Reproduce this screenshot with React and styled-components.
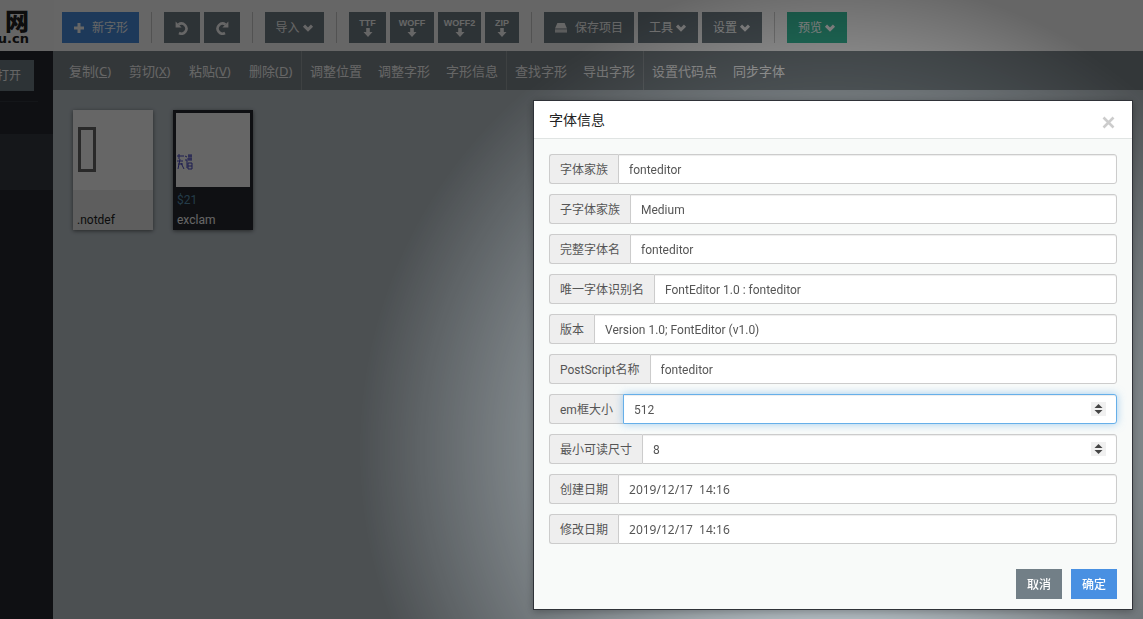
import React from "react";
import styled, { createGlobalStyle, css } from "styled-components";

const Global = createGlobalStyle`
  * { box-sizing: border-box; }
  html, body, #root { height: 100%; }
  body { margin: 0; overflow: hidden; background: #bec8ce; color: #555;
    font: 12px/18px "Noto Sans", "Noto Sans CJK SC", sans-serif; }
  button, input { font: inherit; }
`;

const Page = styled.div`display: flex; flex-direction: column; min-height: 100%;`;
const Header = styled.header`display: flex; align-items: center; height: 51px; background: #fff;`;
const Logo = styled.div`
  display: flex; flex-direction: column; align-items: flex-end; flex: none;
  width: 54px; height: 51px; padding: 8px 25px 0 0; overflow: hidden; color: #222; font-weight: 700;
  background: #fcfcfc;
`;
const LogoMark = styled.span`font: 900 24px/24px "Noto Sans CJK SC", sans-serif;`;
const LogoUrl = styled.span`font: 700 13px/14px "DejaVu Sans", sans-serif;`;
const Tools = styled.div`display: flex; align-items: center; padding: 4px 0 0 8px;`;
const Group = styled.div`
  display: flex; gap: 4px;
  & + & { margin-left: 12px; padding-left: 12px; border-left: 1px solid #ccc; }
`;
const ToolButton = styled.button`
  display: flex; align-items: center; justify-content: center; gap: ${(p) => p.$gap || 2}px;
  width: ${(p) => p.$w}px; height: 31px; padding: 0; border: 0; color: #fff; white-space: nowrap;
  background: ${(p) => p.$bg || "#727f87"};
`;
const Format = styled.span`
  display: flex; flex-direction: column; align-items: center; gap: 1px;
  font: 700 9px/8px "Liberation Sans Narrow", "Liberation Sans", sans-serif;
`;
const Main = styled.div`display: flex; flex: 1;`;
const Side = styled.aside`flex: none; width: 53px; background: #262930;`;
const SideTop = styled.div`height: 83px; padding-top: 9px;`;
const OpenButton = styled.button`
  display: flex; justify-content: flex-end; align-items: center; width: 34px; height: 31px;
  padding: 0 13px 0 0; border: 0; color: #fff; background: #727f87; white-space: nowrap; overflow: hidden;
`;
const SideRule = styled.div`width: 38px; margin-top: 10px; border-top: 1px solid #34383f;`;
const SideItem = styled.div`height: 56px; background: #363a42;`;
const Content = styled.main`flex: 1; min-width: 0;`;
const Commands = styled.nav`display: flex; height: 39px; background: #7f898e;`;
const CommandGroup = styled.div`
  display: flex; gap: 16px; padding: 0 8px;
  &:first-child { padding-left: 16px; }
  & + & { border-left: 1px solid #9ba2a6; }
`;
const Command = styled.button`
  min-width: 44px; padding: 0; border: 0; background: none; color: #fff;
  font-size: 13px; line-height: 38px; text-align: left; white-space: nowrap;
`;
const Glyphs = styled.div`display: flex; gap: 20px; padding: 20px;`;
const Glyph = styled.figure`
  display: flex; flex-direction: column; width: 80px; height: 120px; margin: 0;
  padding: ${(p) => (p.$active ? "3px 3px 0" : "0")};
  color: ${(p) => (p.$active ? "#fff" : "#222")}; background: ${(p) => (p.$active ? "#262930" : "#ebebeb")};
  box-shadow: 0 1px 4px rgba(0, 0, 0, .5);
`;
const Preview = styled.svg`flex: none; display: block; width: 100%; background: #fff;`;
const Caption = styled.figcaption`
  flex: 1; display: flex; flex-direction: column; justify-content: flex-end;
  padding: 0 ${(p) => (p.$active ? 1 : 4)}px; font-family: Roboto, sans-serif; line-height: 20px;
`;
const Code = styled.span`color: #5b96b8;`;

const Backdrop = styled.div`
  position: fixed; inset: 0;
  display: flex; justify-content: flex-end; align-items: flex-start; padding: 100px 10px 0;
  background: radial-gradient(circle at 833px 450px, rgba(0,0,0,0) 0, rgba(0,0,0,.05) 150px, rgba(0,0,0,.33) 303px, rgba(0,0,0,.6) 474px);
`;
const Dialog = styled.section`
  width: 600px; border: 1px solid #2f3238; background: #f8faf9; box-shadow: 0 2px 8px rgba(0, 0, 0, .3);
`;
const DialogHead = styled.header`
  display: flex; justify-content: space-between; align-items: center; height: 38px;
  padding: 0 15px; background: #fff; border-bottom: 1px solid #e0e4e3;
`;
const Title = styled.h1`margin: 0; color: #222; font-size: 14px; line-height: 20px; font-weight: 400;`;
const Close = styled.button`display: flex; padding: 6px 2px 0; border: 0; background: none; color: #ccc;`;
const Form = styled.form`
  display: flex; flex-direction: column; gap: 10px; padding: 15px 15px 0;
  font-family: Roboto, "Noto Sans CJK SC", sans-serif;
`;
const Field = styled.div`display: flex; height: 30px;`;
const Label = styled.label`
  flex: none; padding: 6px 10px 4px; border: 1px solid #ccc; border-right: 0; border-radius: 3px 0 0 3px; background: #eee;
`;
const InputBox = styled.div`
  flex: 1; display: flex; border: 1px solid #ccc; border-radius: 0 3px 3px 0; background: #fff;
  box-shadow: inset 0 1px 1px rgba(0, 0, 0, .075);
  ${(p) => p.$focus && css`position: relative; border-color: #66afe9;
    box-shadow: inset 0 1px 1px rgba(0, 0, 0, .075), 0 0 8px rgba(102, 175, 233, .6);`}
`;
const Input = styled.input`
  flex: 1; min-width: 0; padding: 2px 10px 0; border: 0; outline: 0; background: none; color: #555;
  appearance: textfield;
  ${(p) => p.$date && css`font-family: "Noto Sans", sans-serif;`}
  &::-webkit-inner-spin-button { appearance: none; }
`;
const Spinner = styled.svg`flex: none; width: 15px; height: 14px; margin: 7px 10px 0 0; background: #f0f0f0;`;
const Actions = styled.footer`display: flex; justify-content: flex-end; gap: 9px; padding: 15px 0 10px;`;
const ActionButton = styled.button`
  width: 46px; height: 30px; padding: 2px 0 0; border: 0; color: #fff; font-weight: 500;
  background: ${(p) => (p.$primary ? "#4990e2" : "#727f87")};
`;

const Chevron = () => (
  <svg width="12" height="12" viewBox="0 0 12 12"><path d="M2 3.6L6 7.6L10 3.6" fill="none" stroke="currentColor" strokeWidth="3" /></svg>
);
const Plus = () => (
  <svg width="12" height="12" viewBox="0 0 12 12"><path d="M6 1V11M1 6H11" stroke="currentColor" strokeWidth="3" /></svg>
);
const Turn = ({ flip }) => (
  <svg width="14" height="14" viewBox="0 0 14 14">
    <g transform={flip ? "translate(14 0) scale(-1 1)" : undefined}>
      <path d="M3.5 3.5A5 5 0 1 1 4 12" fill="none" stroke="currentColor" strokeWidth="2.6" />
      <path d="M.6 .5V6.5H6.6Z" fill="currentColor" />
    </g>
  </svg>
);
const Down = () => (
  <svg width="10" height="9" viewBox="0 0 10 9"><path d="M3.2 0H6.8V4H9.5L5 9L.5 4H3.2Z" fill="currentColor" /></svg>
);
const Disk = () => (
  <svg width="12" height="10" viewBox="0 0 12 10"><path d="M2.4 0H9.6L12 5.5H0Z" fill="currentColor" /><path d="M0 6.3H12V9.6H0Z" fill="currentColor" opacity=".8" /></svg>
);

const FORMATS = [["TTF", 37], ["WOFF", 44], ["WOFF2", 43], ["ZIP", 34]];
const COMMANDS = [
  [["复制", "C"], ["剪切", "X"], ["粘贴", "V"], ["删除", "D"]],
  [["调整位置"], ["调整字形"], ["字形信息"]],
  [["查找字形"], ["导出字形"]],
  [["设置代码点"], ["同步字体"]],
];
const FIELDS = [
  ["family", "字体家族", "fonteditor"],
  ["subfamily", "子字体家族", "Medium"],
  ["fullname", "完整字体名", "fonteditor"],
  ["unique", "唯一字体识别名", "FontEditor 1.0 : fonteditor"],
  ["version", "版本", "Version 1.0; FontEditor (v1.0)"],
  ["postscript", "PostScript名称", "fonteditor"],
  ["em", "em框大小", "512", "number", true],
  ["minsize", "最小可读尺寸", "8", "number"],
  ["created", "创建日期", "2019/12/17  14:16", "date"],
  ["modified", "修改日期", "2019/12/17  14:16", "date"],
];

export default function App() {
  return (
    <>
      <Global />
      <Page>
        <Header>
          <Logo><LogoMark>网</LogoMark><LogoUrl>ou.cn</LogoUrl></Logo>
          <Tools>
            <Group><ToolButton $w={77} $gap={7} $bg="#4990e2"><Plus />新字形</ToolButton></Group>
            <Group>
              <ToolButton $w={36} aria-label="撤销"><Turn /></ToolButton>
              <ToolButton $w={36} aria-label="重做"><Turn flip /></ToolButton>
            </Group>
            <Group><ToolButton $w={59}>导入<Chevron /></ToolButton></Group>
            <Group>
              {FORMATS.map(([name, w]) => (
                <ToolButton key={name} $w={w}><Format>{name}<Down /></Format></ToolButton>
              ))}
            </Group>
            <Group>
              <ToolButton $w={90} $gap={8}><Disk />保存项目</ToolButton>
              <ToolButton $w={60}>工具<Chevron /></ToolButton>
              <ToolButton $w={60}>设置<Chevron /></ToolButton>
            </Group>
            <Group><ToolButton $w={60} $bg="#37bc9b">预览<Chevron /></ToolButton></Group>
          </Tools>
        </Header>
        <Main>
          <Side>
            <SideTop><OpenButton>打开</OpenButton><SideRule /></SideTop>
            <SideItem />
          </Side>
          <Content>
            <Commands>
              {COMMANDS.map((group, i) => (
                <CommandGroup key={i}>
                  {group.map(([name, key]) => (
                    <Command key={name}>{name}{key && <>(<u>{key}</u>)</>}</Command>
                  ))}
                </CommandGroup>
              ))}
            </Commands>
            <Glyphs>
              <Glyph>
                <Preview height="80" viewBox="0 0 80 80"><path d="M6.5 18.5H21.5V60.5H6.5Z" fill="none" stroke="#666" strokeWidth="3" /></Preview>
                <Caption>.notdef</Caption>
              </Glyph>
              <Glyph $active>
                <Preview height="74" viewBox="0 0 74 74">
                  <path d="M1 43H8M3 41V46M1 48H7M2 51H7M4 46L2 56M5 50L8 56M9 43L11 44M9 47H11V55M12 43H16M11 46H16M13 41V48M15 41V48M12 50H16V56H12ZM12 53H16" fill="none" stroke="#4848c8" strokeWidth="1" />
                </Preview>
                <Caption $active><Code>$21</Code>exclam</Caption>
              </Glyph>
            </Glyphs>
          </Content>
        </Main>
      </Page>
      <Backdrop>
        <Dialog role="dialog" aria-labelledby="dialog-title">
          <DialogHead>
            <Title id="dialog-title">字体信息</Title>
            <Close aria-label="关闭">
              <svg width="13" height="13" viewBox="0 0 13 13"><path d="M1.5 1.5L11.5 11.5M11.5 1.5L1.5 11.5" stroke="currentColor" strokeWidth="2.6" /></svg>
            </Close>
          </DialogHead>
          <Form>
            {FIELDS.map(([id, label, value, kind, focus]) => (
              <Field key={id}>
                <Label htmlFor={id}>{label}</Label>
                <InputBox $focus={focus}>
                  <Input id={id} type={kind === "number" ? "number" : "text"} $date={kind === "date"} defaultValue={value} />
                  {kind === "number" && <Spinner viewBox="0 0 15 14"><path d="M7.5 2L11.5 6H3.5ZM7.5 12L11.5 8H3.5Z" fill="#444" /></Spinner>}
                </InputBox>
              </Field>
            ))}
            <Actions>
              <ActionButton type="button">取消</ActionButton>
              <ActionButton type="button" $primary>确定</ActionButton>
            </Actions>
          </Form>
        </Dialog>
      </Backdrop>
    </>
  );
}
